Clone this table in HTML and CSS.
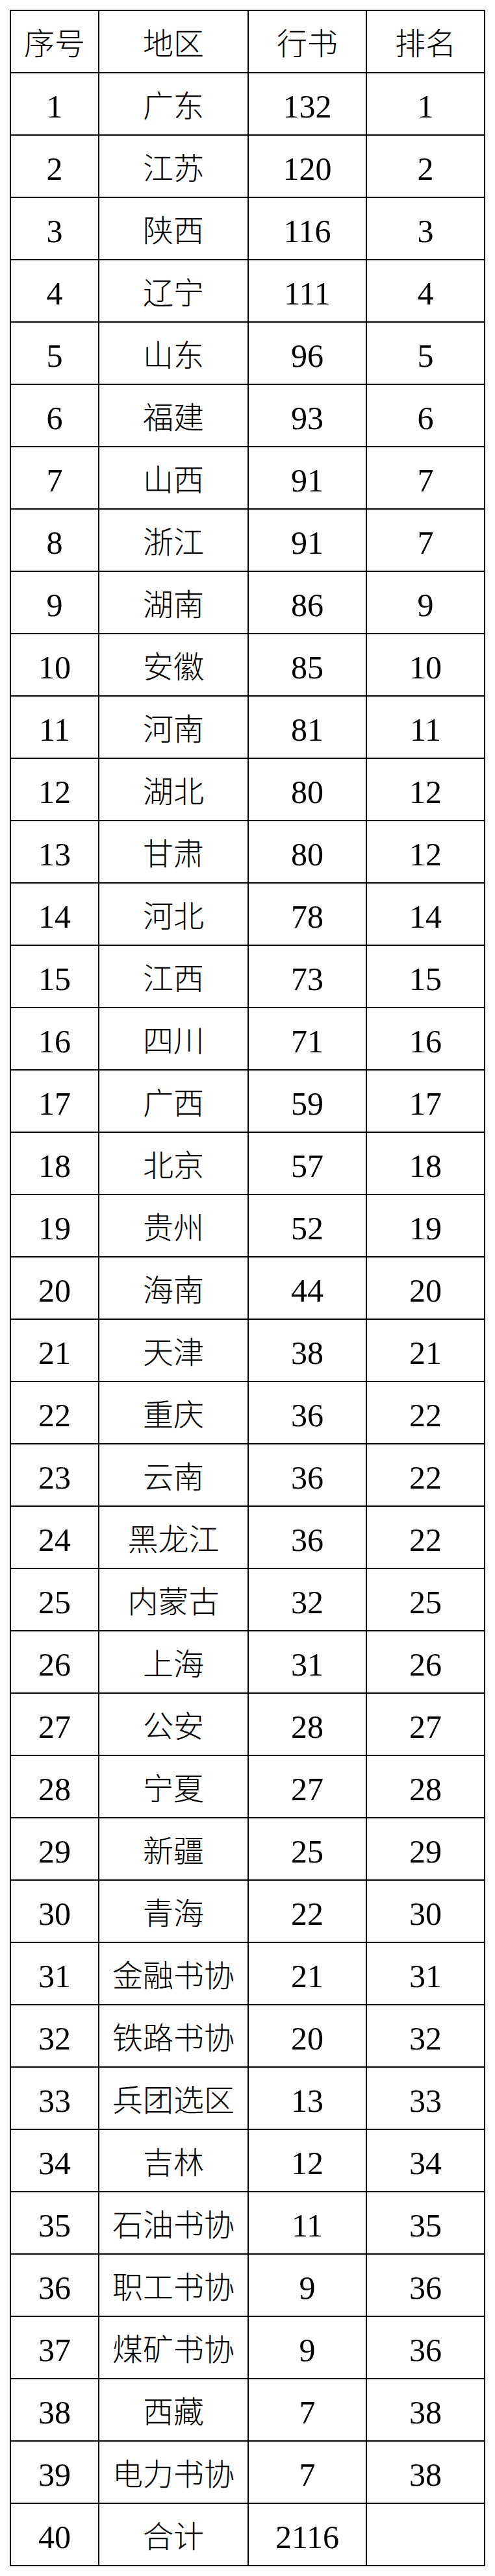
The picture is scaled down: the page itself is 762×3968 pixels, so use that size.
FILE: index.html
```html
<!DOCTYPE html>
<html lang="zh-CN">
<head>
<meta charset="utf-8">
<title>行书统计</title>
<link rel="stylesheet" href="styles.css">
</head>
<body>
<table class="stats">
  <colgroup>
    <col class="c-no"><col class="c-area"><col class="c-num"><col class="c-rank">
  </colgroup>
  <thead>
    <tr><th>序号</th><th>地区</th><th>行书</th><th>排名</th></tr>
  </thead>
  <tbody>
    <tr><td>1</td><td>广东</td><td>132</td><td>1</td></tr>
    <tr><td>2</td><td>江苏</td><td>120</td><td>2</td></tr>
    <tr><td>3</td><td>陕西</td><td>116</td><td>3</td></tr>
    <tr><td>4</td><td>辽宁</td><td>111</td><td>4</td></tr>
    <tr><td>5</td><td>山东</td><td>96</td><td>5</td></tr>
    <tr><td>6</td><td>福建</td><td>93</td><td>6</td></tr>
    <tr><td>7</td><td>山西</td><td>91</td><td>7</td></tr>
    <tr><td>8</td><td>浙江</td><td>91</td><td>7</td></tr>
    <tr><td>9</td><td>湖南</td><td>86</td><td>9</td></tr>
    <tr><td>10</td><td>安徽</td><td>85</td><td>10</td></tr>
    <tr><td>11</td><td>河南</td><td>81</td><td>11</td></tr>
    <tr><td>12</td><td>湖北</td><td>80</td><td>12</td></tr>
    <tr><td>13</td><td>甘肃</td><td>80</td><td>12</td></tr>
    <tr><td>14</td><td>河北</td><td>78</td><td>14</td></tr>
    <tr><td>15</td><td>江西</td><td>73</td><td>15</td></tr>
    <tr><td>16</td><td>四川</td><td>71</td><td>16</td></tr>
    <tr><td>17</td><td>广西</td><td>59</td><td>17</td></tr>
    <tr><td>18</td><td>北京</td><td>57</td><td>18</td></tr>
    <tr><td>19</td><td>贵州</td><td>52</td><td>19</td></tr>
    <tr><td>20</td><td>海南</td><td>44</td><td>20</td></tr>
    <tr><td>21</td><td>天津</td><td>38</td><td>21</td></tr>
    <tr><td>22</td><td>重庆</td><td>36</td><td>22</td></tr>
    <tr><td>23</td><td>云南</td><td>36</td><td>22</td></tr>
    <tr><td>24</td><td>黑龙江</td><td>36</td><td>22</td></tr>
    <tr><td>25</td><td>内蒙古</td><td>32</td><td>25</td></tr>
    <tr><td>26</td><td>上海</td><td>31</td><td>26</td></tr>
    <tr><td>27</td><td>公安</td><td>28</td><td>27</td></tr>
    <tr><td>28</td><td>宁夏</td><td>27</td><td>28</td></tr>
    <tr><td>29</td><td>新疆</td><td>25</td><td>29</td></tr>
    <tr><td>30</td><td>青海</td><td>22</td><td>30</td></tr>
    <tr><td>31</td><td>金融书协</td><td>21</td><td>31</td></tr>
    <tr><td>32</td><td>铁路书协</td><td>20</td><td>32</td></tr>
    <tr><td>33</td><td>兵团选区</td><td>13</td><td>33</td></tr>
    <tr><td>34</td><td>吉林</td><td>12</td><td>34</td></tr>
    <tr><td>35</td><td>石油书协</td><td>11</td><td>35</td></tr>
    <tr><td>36</td><td>职工书协</td><td>9</td><td>36</td></tr>
    <tr><td>37</td><td>煤矿书协</td><td>9</td><td>36</td></tr>
    <tr><td>38</td><td>西藏</td><td>7</td><td>38</td></tr>
    <tr><td>39</td><td>电力书协</td><td>7</td><td>38</td></tr>
    <tr><td>40</td><td>合计</td><td>2116</td><td></td></tr>
  </tbody>
</table>
</body>
</html>
```
FILE: styles.css
```css
html, body {
  margin: 0;
  padding: 0;
  background: #fff;
}
body {
  padding: 15px 0 0 15px;
  font-family: "Liberation Serif", "Noto Sans CJK SC", serif;
  color: #000;
}
.stats {
  border-collapse: collapse;
  table-layout: fixed;
  width: 732px;
  border: 2px solid #000;
}
.c-no { width: 136px; }
.c-area { width: 230px; }
.c-num { width: 182px; }
.c-rank { width: 182px; }
.stats th,
.stats td {
  border: 2px solid #000;
  height: 96px;
  box-sizing: border-box;
  padding: 8px 0 0 0;
  text-align: center;
  vertical-align: middle;
  font-size: 50px;
  font-weight: 300;
  line-height: 1;
  white-space: nowrap;
}
.stats th,
.stats td:nth-child(2) {
  font-size: 47px;
}
```
